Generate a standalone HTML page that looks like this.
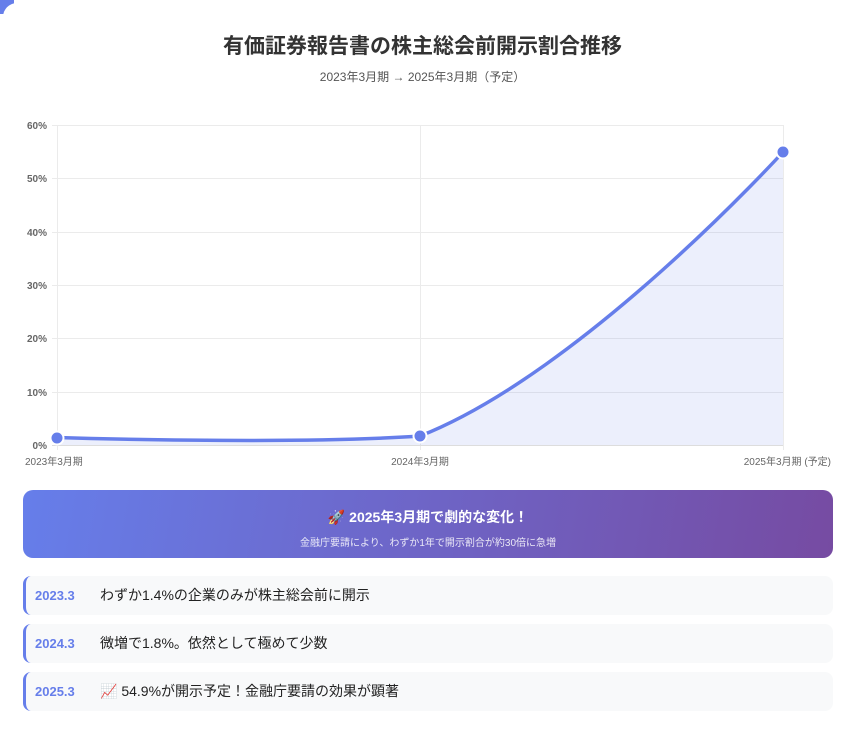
<!DOCTYPE html>
<html><head><meta charset="utf-8"><style>
*{margin:0;padding:0;box-sizing:border-box}
body{width:845px;height:738px;background:#fff;font-family:"Liberation Sans","Noto Sans CJK JP",sans-serif;position:relative;overflow:hidden}
.corner{position:absolute;left:0;top:0;width:14px;height:14px;background:#667eea}
.corner:after{content:"";position:absolute;left:0;top:0;width:28px;height:28px;border-radius:14px;background:#fff;left:3px;top:3px}
h1{position:absolute;top:30px;width:100%;text-align:center;font-size:21px;font-weight:bold;color:#333}
.sub{position:absolute;top:68px;width:100%;text-align:center;font-size:12px;color:#555}
svg{position:absolute;left:0;top:0}
.banner{position:absolute;left:23px;top:490px;width:810px;height:68px;border-radius:10px;background:linear-gradient(100deg,#667eea,#764ba2);color:#fff;text-align:center}
.banner .t{font-size:14px;font-weight:bold;margin-top:17px}
.banner .s{font-size:10px;opacity:.85;margin-top:7px}
.item{position:absolute;left:23px;width:810px;height:39px;background:#f8f9fa;border-radius:8px;border-left:3px solid #667eea;font-size:14px;color:#222;line-height:39px;padding-left:9px}
.item b{color:#667eea;display:inline-block;width:65px;font-size:13px}
</style></head><body>
<div class="corner"></div>
<h1>有価証券報告書の株主総会前開示割合推移</h1>
<div class="sub">2023年3月期 → 2025年3月期（予定）</div>
<svg width="845" height="480" font-family="Liberation Sans, Noto Sans CJK JP, sans-serif">
<g stroke="#ebebeb" stroke-width="1">
<line x1="52" y1="125.5" x2="783" y2="125.5"/><line x1="52" y1="178.5" x2="783" y2="178.5"/><line x1="52" y1="232.5" x2="783" y2="232.5"/><line x1="52" y1="285.5" x2="783" y2="285.5"/><line x1="52" y1="338.5" x2="783" y2="338.5"/><line x1="52" y1="392.5" x2="783" y2="392.5"/>
<line x1="57.5" y1="125" x2="57.5" y2="450"/><line x1="420.5" y1="125" x2="420.5" y2="450"/><line x1="783.5" y1="125" x2="783.5" y2="450"/>
</g>
<line x1="52" y1="445.5" x2="783" y2="445.5" stroke="#ddd"/>
<g font-size="10" fill="#666" text-anchor="end" font-weight="bold">
<text x="47" y="129">60%</text><text x="47" y="182">50%</text><text x="47" y="236">40%</text><text x="47" y="289">30%</text><text x="47" y="342">20%</text><text x="47" y="396">10%</text><text x="47" y="449">0%</text>
</g>
<g font-size="10" fill="#666">
<text x="25" y="465">2023年3月期</text><text x="420" y="465" text-anchor="middle">2024年3月期</text><text x="831" y="465" text-anchor="end">2025年3月期 (予定)</text>
</g>
<path d="M57,437.5 C57,437.5 292,445 420,436 C583,372 783,152 783,152 L783,445 L57,445Z" fill="rgba(102,126,234,0.12)"/>
<path d="M57,437.5 C57,437.5 292,445 420,436 C583,372 783,152 783,152" fill="none" stroke="#667eea" stroke-width="3.5"/>
<g fill="#667eea" stroke="#fff" stroke-width="2"><circle cx="57" cy="438" r="6.5"/><circle cx="420" cy="436" r="6.5"/><circle cx="783" cy="152" r="6.5"/></g>
</svg>
<div class="banner"><div class="t">🚀 2025年3月期で劇的な変化！</div><div class="s">金融庁要請により、わずか1年で開示割合が約30倍に急増</div></div>
<div class="item" style="top:576px"><b>2023.3</b>わずか1.4%の企業のみが株主総会前に開示</div>
<div class="item" style="top:624px"><b>2024.3</b>微増で1.8%。依然として極めて少数</div>
<div class="item" style="top:672px"><b>2025.3</b>📈 54.9%が開示予定！金融庁要請の効果が顕著</div>
</body></html>
